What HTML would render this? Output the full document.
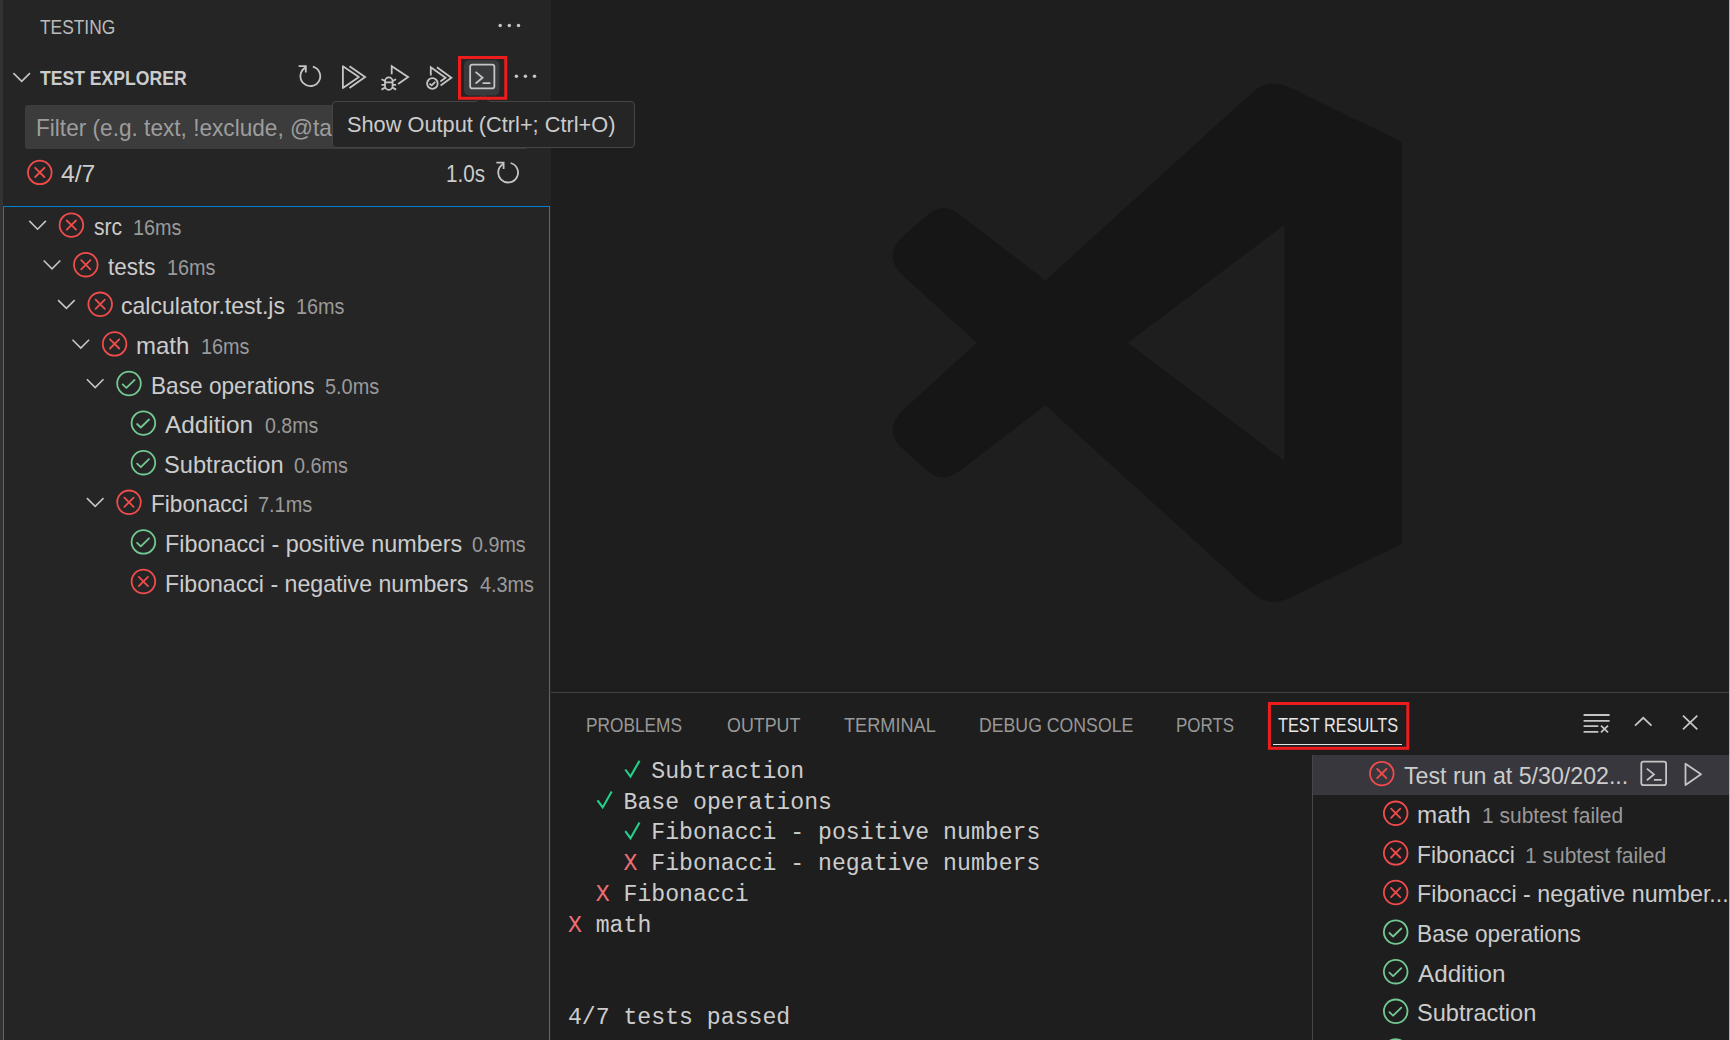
<!DOCTYPE html>
<html><head><meta charset="utf-8"><style>
html,body{margin:0;padding:0;}
body{width:1730px;height:1040px;overflow:hidden;position:relative;background:#1e1e1e;font-family:"Liberation Sans",sans-serif;}
.abs{position:absolute;}
.t{position:absolute;white-space:pre;line-height:1;transform-origin:0 0;}
.m{position:absolute;white-space:pre;line-height:1;font-family:"Liberation Mono",monospace;font-size:23.167px;color:#cccccc;}
</style></head><body>
<svg class="abs" style="left:0;top:0" width="1730" height="1040"><path fill="#161616" fill-rule="evenodd" d="M1401.8 141.8L1290 87.8Q1268.5 77.6 1252 92.8L1045.4 280.4L959.4 214.5Q942.7 201.7 928.1 214.5L904 235.6Q881.2 255.6 904 276.4L976.9 342.8L904 409.2Q881.2 430 904 450L928.1 471.1Q942.7 483.9 959.4 471.1L1045.4 405.2L1252 592.8Q1268.5 608 1290 597.8L1401.8 543.8ZM1284.4 224.8L1127.7 342.8L1284.4 460.8Z"/></svg>
<div class="abs" style="left:0;top:0;width:3px;height:1040px;background:#333333"></div>
<div class="abs" style="left:3px;top:0;width:548px;height:1040px;background:#252526"></div>
<div class="abs" style="left:25.3px;top:105.1px;width:502.7px;height:44.4px;background:#3c3c3c;border-radius:3px;overflow:hidden">
</div>
<div class="abs" style="left:0;top:100px;width:332px;height:55px;overflow:hidden"><div class="t" style="left:36.43px;top:17px;font-size:23.4px;color:#9d9d9d;transform:scaleX(0.9672)">Filter (e.g. text, !exclude, @tag)</div></div>
<div class="abs" style="left:3px;top:206px;width:546.5px;height:900px;border:1.5px solid #007fd4;box-sizing:border-box"></div>
<div class="abs" style="left:551px;top:692px;width:1179px;height:1px;background:#414141"></div>
<div class="abs" style="left:1312px;top:755px;width:1px;height:285px;background:#474747"></div>
<div class="abs" style="left:1313px;top:755px;width:417px;height:40px;background:#37373d"></div>
<div class="abs" style="left:1728.6px;top:0;width:1.4px;height:1040px;background:#b4b4b4"></div>
<div class="t" style="left:39.90px;top:18.00px;font-size:19.8px;font-weight:400;color:#bbbbbb;transform:scaleX(0.8776);">TESTING</div>
<div class="t" style="left:39.90px;top:69.00px;font-size:19.8px;font-weight:700;color:#cccccc;transform:scaleX(0.8897);">TEST EXPLORER</div>
<div class="t" style="left:60.70px;top:163.00px;font-size:23.4px;font-weight:400;color:#cccccc;transform:scaleX(1.0562);">4/7</div>
<div class="t" style="left:446.42px;top:163.00px;font-size:23.4px;font-weight:400;color:#cccccc;transform:scaleX(0.8814);">1.0s</div>
<div class="t" style="left:93.50px;top:216.00px;font-size:23.4px;font-weight:400;color:#cccccc;transform:scaleX(0.9000);">src</div>
<div class="t" style="left:133.40px;top:217.00px;font-size:22px;font-weight:400;color:#9a9a9a;transform:scaleX(0.9000);">16ms</div>
<div class="t" style="left:107.60px;top:256.00px;font-size:23.4px;font-weight:400;color:#cccccc;transform:scaleX(0.9592);">tests</div>
<div class="t" style="left:166.60px;top:257.00px;font-size:22px;font-weight:400;color:#9a9a9a;transform:scaleX(0.9000);">16ms</div>
<div class="t" style="left:121.31px;top:295.00px;font-size:23.4px;font-weight:400;color:#cccccc;transform:scaleX(0.9855);">calculator.test.js</div>
<div class="t" style="left:296.20px;top:296.00px;font-size:22px;font-weight:400;color:#9a9a9a;transform:scaleX(0.9000);">16ms</div>
<div class="t" style="left:136.17px;top:335.00px;font-size:23.4px;font-weight:400;color:#cccccc;transform:scaleX(1.0260);">math</div>
<div class="t" style="left:200.60px;top:336.00px;font-size:22px;font-weight:400;color:#9a9a9a;transform:scaleX(0.9000);">16ms</div>
<div class="t" style="left:150.63px;top:375.00px;font-size:23.4px;font-weight:400;color:#cccccc;transform:scaleX(0.9679);">Base operations</div>
<div class="t" style="left:324.69px;top:376.00px;font-size:22px;font-weight:400;color:#9a9a9a;transform:scaleX(0.9051);">5.0ms</div>
<div class="t" style="left:165.40px;top:414.00px;font-size:23.4px;font-weight:400;color:#cccccc;transform:scaleX(1.0405);">Addition</div>
<div class="t" style="left:264.60px;top:415.00px;font-size:22px;font-weight:400;color:#9a9a9a;transform:scaleX(0.8900);">0.8ms</div>
<div class="t" style="left:164.39px;top:454.00px;font-size:23.4px;font-weight:400;color:#cccccc;transform:scaleX(1.0112);">Subtraction</div>
<div class="t" style="left:294.10px;top:455.00px;font-size:22px;font-weight:400;color:#9a9a9a;transform:scaleX(0.9000);">0.6ms</div>
<div class="t" style="left:150.63px;top:493.00px;font-size:23.4px;font-weight:400;color:#cccccc;transform:scaleX(0.9684);">Fibonacci</div>
<div class="t" style="left:257.59px;top:494.00px;font-size:22px;font-weight:400;color:#9a9a9a;transform:scaleX(0.9051);">7.1ms</div>
<div class="t" style="left:164.50px;top:533.00px;font-size:23.4px;font-weight:400;color:#cccccc;transform:scaleX(0.9980);">Fibonacci - positive numbers</div>
<div class="t" style="left:471.90px;top:534.00px;font-size:22px;font-weight:400;color:#9a9a9a;transform:scaleX(0.8967);">0.9ms</div>
<div class="t" style="left:164.81px;top:573.00px;font-size:23.4px;font-weight:400;color:#cccccc;transform:scaleX(0.9889);">Fibonacci - negative numbers</div>
<div class="t" style="left:479.90px;top:574.00px;font-size:22px;font-weight:400;color:#9a9a9a;transform:scaleX(0.9017);">4.3ms</div>
<div class="t" style="left:586.43px;top:716.00px;font-size:19.8px;font-weight:400;color:#989898;transform:scaleX(0.8734);">PROBLEMS</div>
<div class="t" style="left:726.90px;top:716.00px;font-size:19.8px;font-weight:400;color:#989898;transform:scaleX(0.9025);">OUTPUT</div>
<div class="t" style="left:843.90px;top:716.00px;font-size:19.8px;font-weight:400;color:#989898;transform:scaleX(0.9180);">TERMINAL</div>
<div class="t" style="left:979.01px;top:716.00px;font-size:19.8px;font-weight:400;color:#989898;transform:scaleX(0.8942);">DEBUG CONSOLE</div>
<div class="t" style="left:1175.84px;top:716.00px;font-size:19.8px;font-weight:400;color:#989898;transform:scaleX(0.8576);">PORTS</div>
<div class="t" style="left:1277.70px;top:716.00px;font-size:19.8px;font-weight:400;color:#e7e7e7;transform:scaleX(0.8255);">TEST RESULTS</div>
<div class="t" style="left:1403.90px;top:765.00px;font-size:23.4px;font-weight:400;color:#cccccc;transform:scaleX(0.9911);">Test run at 5/30/202...</div>
<div class="t" style="left:1417.07px;top:804.00px;font-size:23.4px;font-weight:400;color:#cccccc;transform:scaleX(1.0340);">math</div>
<div class="t" style="left:1481.75px;top:805.00px;font-size:22px;font-weight:400;color:#989898;transform:scaleX(0.9534);">1 subtest failed</div>
<div class="t" style="left:1417.12px;top:844.00px;font-size:23.4px;font-weight:400;color:#cccccc;transform:scaleX(0.9765);">Fibonacci</div>
<div class="t" style="left:1525.25px;top:845.00px;font-size:22px;font-weight:400;color:#989898;transform:scaleX(0.9534);">1 subtest failed</div>
<div class="t" style="left:1417.11px;top:883.00px;font-size:23.4px;font-weight:400;color:#cccccc;transform:scaleX(0.9949);">Fibonacci - negative number...</div>
<div class="t" style="left:1417.13px;top:923.00px;font-size:23.4px;font-weight:400;color:#cccccc;transform:scaleX(0.9696);">Base operations</div>
<div class="t" style="left:1418.10px;top:963.00px;font-size:23.4px;font-weight:400;color:#cccccc;transform:scaleX(1.0357);">Addition</div>
<div class="t" style="left:1417.09px;top:1002.00px;font-size:23.4px;font-weight:400;color:#cccccc;transform:scaleX(1.0086);">Subtraction</div>
<div class="m" style="left:651.30px;top:761.00px">Subtraction</div>
<div class="m" style="left:623.50px;top:792.00px">Base operations</div>
<div class="m" style="left:651.30px;top:822.00px">Fibonacci - positive numbers</div>
<div class="m" style="left:651.30px;top:853.00px">Fibonacci - negative numbers</div>
<div class="m" style="left:623.50px;top:853.00px;color:#ee6f75">X</div>
<div class="m" style="left:623.50px;top:884.00px">Fibonacci</div>
<div class="m" style="left:595.70px;top:884.00px;color:#ee6f75">X</div>
<div class="m" style="left:595.70px;top:915.00px">math</div>
<div class="m" style="left:567.90px;top:915.00px;color:#ee6f75">X</div>
<div class="m" style="left:567.90px;top:1007.00px">4/7 tests passed</div>
<svg class="abs" style="left:0;top:0" width="1730" height="1040">
<path d="M29.3 220.9L37.6 229.2L45.900000000000006 220.9" fill="none" stroke="#c5c5c5" stroke-width="1.6"/>
<circle cx="71.4" cy="225.1" r="11.8" fill="none" stroke="#f14c4c" stroke-width="1.8"/><path d="M66.80000000000001 220.5L76.0 229.7M76.0 220.5L66.80000000000001 229.7" stroke="#f14c4c" stroke-width="1.8" stroke-linecap="round"/>
<path d="M43.7 260.5L52.0 268.8L60.300000000000004 260.5" fill="none" stroke="#c5c5c5" stroke-width="1.6"/>
<circle cx="85.80000000000001" cy="264.7" r="11.8" fill="none" stroke="#f14c4c" stroke-width="1.8"/><path d="M81.20000000000002 260.09999999999997L90.4 269.3M90.4 260.09999999999997L81.20000000000002 269.3" stroke="#f14c4c" stroke-width="1.8" stroke-linecap="round"/>
<path d="M58.1 300.1L66.4 308.40000000000003L74.7 300.1" fill="none" stroke="#c5c5c5" stroke-width="1.6"/>
<circle cx="100.2" cy="304.3" r="11.8" fill="none" stroke="#f14c4c" stroke-width="1.8"/><path d="M95.60000000000001 299.7L104.8 308.90000000000003M104.8 299.7L95.60000000000001 308.90000000000003" stroke="#f14c4c" stroke-width="1.8" stroke-linecap="round"/>
<path d="M72.5 339.7L80.8 348.0L89.1 339.7" fill="none" stroke="#c5c5c5" stroke-width="1.6"/>
<circle cx="114.60000000000001" cy="343.9" r="11.8" fill="none" stroke="#f14c4c" stroke-width="1.8"/><path d="M110.00000000000001 339.29999999999995L119.2 348.5M119.2 339.29999999999995L110.00000000000001 348.5" stroke="#f14c4c" stroke-width="1.8" stroke-linecap="round"/>
<path d="M86.9 379.3L95.2 387.6L103.5 379.3" fill="none" stroke="#c5c5c5" stroke-width="1.6"/>
<circle cx="129.0" cy="383.5" r="11.8" fill="none" stroke="#73c991" stroke-width="1.8"/><path d="M122.7 384.4L126.4 387.9L134.6 379.9" fill="none" stroke="#73c991" stroke-width="1.8" stroke-linecap="round" stroke-linejoin="round"/>
<circle cx="143.4" cy="423.1" r="11.8" fill="none" stroke="#73c991" stroke-width="1.8"/><path d="M137.1 424.0L140.8 427.5L149.0 419.5" fill="none" stroke="#73c991" stroke-width="1.8" stroke-linecap="round" stroke-linejoin="round"/>
<circle cx="143.4" cy="462.70000000000005" r="11.8" fill="none" stroke="#73c991" stroke-width="1.8"/><path d="M137.1 463.6L140.8 467.1L149.0 459.1" fill="none" stroke="#73c991" stroke-width="1.8" stroke-linecap="round" stroke-linejoin="round"/>
<path d="M86.9 498.09999999999997L95.2 506.4L103.5 498.09999999999997" fill="none" stroke="#c5c5c5" stroke-width="1.6"/>
<circle cx="129.0" cy="502.29999999999995" r="11.8" fill="none" stroke="#f14c4c" stroke-width="1.8"/><path d="M124.4 497.69999999999993L133.6 506.9M133.6 497.69999999999993L124.4 506.9" stroke="#f14c4c" stroke-width="1.8" stroke-linecap="round"/>
<circle cx="143.4" cy="541.9" r="11.8" fill="none" stroke="#73c991" stroke-width="1.8"/><path d="M137.1 542.8L140.8 546.3L149.0 538.3" fill="none" stroke="#73c991" stroke-width="1.8" stroke-linecap="round" stroke-linejoin="round"/>
<circle cx="143.4" cy="581.5" r="11.8" fill="none" stroke="#f14c4c" stroke-width="1.8"/><path d="M138.8 576.9L148.0 586.1M148.0 576.9L138.8 586.1" stroke="#f14c4c" stroke-width="1.8" stroke-linecap="round"/>
<path d="M13.4 73.1L21.700000000000003 81.39999999999999L30.0 73.1" fill="none" stroke="#c5c5c5" stroke-width="1.6"/>
<circle cx="1395.7" cy="1090.5" r="11.8" fill="none" stroke="#73c991" stroke-width="1.8"/><path d="M1389.4 1091.4L1393.1000000000001 1094.9L1401.3 1086.9" fill="none" stroke="#73c991" stroke-width="1.8" stroke-linecap="round" stroke-linejoin="round"/>
<circle cx="39.8" cy="172.4" r="11.8" fill="none" stroke="#f14c4c" stroke-width="1.8"/><path d="M35.199999999999996 167.8L44.4 177.0M44.4 167.8L35.199999999999996 177.0" stroke="#f14c4c" stroke-width="1.8" stroke-linecap="round"/>
<circle cx="1381.8" cy="773.6" r="11.8" fill="none" stroke="#f14c4c" stroke-width="1.8"/><path d="M1377.2 769.0L1386.3999999999999 778.2M1386.3999999999999 769.0L1377.2 778.2" stroke="#f14c4c" stroke-width="1.8" stroke-linecap="round"/>
<circle cx="1395.7" cy="813.3" r="11.8" fill="none" stroke="#f14c4c" stroke-width="1.8"/><path d="M1391.1000000000001 808.6999999999999L1400.3 817.9M1400.3 808.6999999999999L1391.1000000000001 817.9" stroke="#f14c4c" stroke-width="1.8" stroke-linecap="round"/>
<circle cx="1395.7" cy="852.9" r="11.8" fill="none" stroke="#f14c4c" stroke-width="1.8"/><path d="M1391.1000000000001 848.3L1400.3 857.5M1400.3 848.3L1391.1000000000001 857.5" stroke="#f14c4c" stroke-width="1.8" stroke-linecap="round"/>
<circle cx="1395.7" cy="892.5" r="11.8" fill="none" stroke="#f14c4c" stroke-width="1.8"/><path d="M1391.1000000000001 887.9L1400.3 897.1M1400.3 887.9L1391.1000000000001 897.1" stroke="#f14c4c" stroke-width="1.8" stroke-linecap="round"/>
<circle cx="1395.7" cy="932.0999999999999" r="11.8" fill="none" stroke="#73c991" stroke-width="1.8"/><path d="M1389.4 932.9999999999999L1393.1000000000001 936.4999999999999L1401.3 928.4999999999999" fill="none" stroke="#73c991" stroke-width="1.8" stroke-linecap="round" stroke-linejoin="round"/>
<circle cx="1395.7" cy="971.6999999999999" r="11.8" fill="none" stroke="#73c991" stroke-width="1.8"/><path d="M1389.4 972.5999999999999L1393.1000000000001 976.0999999999999L1401.3 968.0999999999999" fill="none" stroke="#73c991" stroke-width="1.8" stroke-linecap="round" stroke-linejoin="round"/>
<circle cx="1395.7" cy="1011.3" r="11.8" fill="none" stroke="#73c991" stroke-width="1.8"/><path d="M1389.4 1012.1999999999999L1393.1000000000001 1015.6999999999999L1401.3 1007.6999999999999" fill="none" stroke="#73c991" stroke-width="1.8" stroke-linecap="round" stroke-linejoin="round"/>
<circle cx="1395.7" cy="1050.9" r="11.8" fill="none" stroke="#73c991" stroke-width="1.8"/><path d="M1389.4 1051.8000000000002L1393.1000000000001 1055.3000000000002L1401.3 1047.3000000000002" fill="none" stroke="#73c991" stroke-width="1.8" stroke-linecap="round" stroke-linejoin="round"/>
<g transform="translate(0 0)"><path d="M312.8 66.6A9.9 9.9 0 1 1 305.4 67.6" fill="none" stroke="#c5c5c5" stroke-width="1.8"/><path d="M298.6 66.2H305.8V72.6" fill="none" stroke="#c5c5c5" stroke-width="1.8"/></g>
<g transform="translate(197.8 96.4)"><path d="M312.8 66.6A9.9 9.9 0 1 1 305.4 67.6" fill="none" stroke="#c5c5c5" stroke-width="1.8"/><path d="M298.6 66.2H305.8V72.6" fill="none" stroke="#c5c5c5" stroke-width="1.8"/></g>
<path d="M342.9 66.2V88L358.9 77.1Z" fill="none" stroke="#c5c5c5" stroke-width="1.8" stroke-linejoin="round"/><path d="M349.5 66.3L365.1 77.1L349.5 87.9" fill="none" stroke="#c5c5c5" stroke-width="1.8"/>
<path d="M391.7 74.2V66.2L408.1 77L398.1 83.9" fill="none" stroke="#c5c5c5" stroke-width="1.8"/><rect x="385" y="77.4" width="7.6" height="12.4" rx="3.8" fill="none" stroke="#c5c5c5" stroke-width="1.8"/><path d="M385 82.3H392.6M381.5 79.3L385 81M381.5 84.9H385M381.5 89.6L385 87.6M396.1 79.3L392.6 81M396.1 84.9H392.6M396.1 89.6L392.6 87.6" fill="none" stroke="#c5c5c5" stroke-width="1.8" stroke-width="1.5"/>
<path d="M430.8 75.4V67.3L445.5 77.8L440.4 81.4" fill="none" stroke="#c5c5c5" stroke-width="1.8"/><path d="M436.9 67.3L451.4 77.8L440.6 85.4" fill="none" stroke="#c5c5c5" stroke-width="1.8"/><circle cx="432.4" cy="83.5" r="5.3" fill="none" stroke="#c5c5c5" stroke-width="1.8"/><path d="M429.5 83.6L431.7 85.4L435.2 81.8" fill="none" stroke="#c5c5c5" stroke-width="1.8" stroke-width="1.5"/>
<rect x="464" y="60" width="35.5" height="35.5" rx="5.4" fill="#393a3b"/>
<rect x="470.15" y="64.65" width="24.200000000000045" height="23.69999999999999" rx="2.2" fill="none" stroke="#c5c5c5" stroke-width="1.8"/><path d="M475.6 71.9L482.6 77.7L475.6 83.5M482.6 83.2H490.40000000000003" fill="none" stroke="#c5c5c5" stroke-width="1.8"/>
<circle cx="500.2" cy="25.5" r="1.75" fill="#c5c5c5"/>
<circle cx="509.3" cy="25.5" r="1.75" fill="#c5c5c5"/>
<circle cx="518.5" cy="25.5" r="1.75" fill="#c5c5c5"/>
<circle cx="516.4" cy="76.3" r="1.75" fill="#c5c5c5"/>
<circle cx="525.4" cy="76.3" r="1.75" fill="#c5c5c5"/>
<circle cx="534.5" cy="76.3" r="1.75" fill="#c5c5c5"/>
<path d="M1583.6 715H1609.6M1583.6 720.8H1609.6M1583.6 726.1H1598.3M1583.6 731.9H1598.3M1601 725.6L1608 732.3M1608 725.6L1601 732.3" fill="none" stroke="#c5c5c5" stroke-width="1.8"/>
<path d="M1635 725.7L1643.25 717.8L1651.5 725.7" fill="none" stroke="#c5c5c5" stroke-width="1.8"/>
<path d="M1683 715.6L1697.3 729.3M1697.3 715.6L1683 729.3" fill="none" stroke="#c5c5c5" stroke-width="1.8"/>
<rect x="1273" y="744" width="129" height="1" fill="#e7e7e7"/>
<rect x="1269.4" y="703.5" width="138.4" height="44.8" fill="none" stroke="#ee1c1c" stroke-width="3"/>
<rect x="1641.3" y="761.6" width="24.799999999999955" height="23.600000000000023" rx="2.2" fill="none" stroke="#c5c5c5" stroke-width="1.8"/><path d="M1646.9 768.6L1653.9 774.4L1646.9 780.2M1653.9 779.9H1661.7" fill="none" stroke="#c5c5c5" stroke-width="1.8"/>
<path d="M1685.5 763.8V785L1701 774.2Z" fill="none" stroke="#c5c5c5" stroke-width="1.8" stroke-linejoin="round"/>
<path d="M625.3 769.5L630.5 776.5999999999999L639.5 760.8" fill="none" stroke="#23d18b" stroke-width="2.1"/>
<path d="M597.4999999999999 800.3L602.6999999999999 807.3999999999999L611.6999999999999 791.5999999999999" fill="none" stroke="#23d18b" stroke-width="2.1"/>
<path d="M625.3 831.1L630.5 838.1999999999999L639.5 822.4" fill="none" stroke="#23d18b" stroke-width="2.1"/>
</svg>
<div class="abs" style="left:332.4px;top:101.1px;width:302.4px;height:47.4px;background:#252526;border:1px solid #454545;border-radius:4px;box-sizing:border-box"></div>
<div class="t" style="left:346.69px;top:114px;font-size:21.6px;color:#cccccc;transform:scaleX(1.0075)">Show Output (Ctrl+; Ctrl+O)</div>
<svg class="abs" style="left:0;top:0" width="1730" height="160"><path d="M475.5 102.2L483 94.6L490.5 102.2Z" fill="#252526"/><path d="M475.8 101.6L483 94.6L490.2 101.6" fill="none" stroke="#454545" stroke-width="1"/><rect x="459.5" y="57.5" width="46.25" height="40.75" fill="none" stroke="#ee1c1c" stroke-width="3"/></svg>
</body></html>
